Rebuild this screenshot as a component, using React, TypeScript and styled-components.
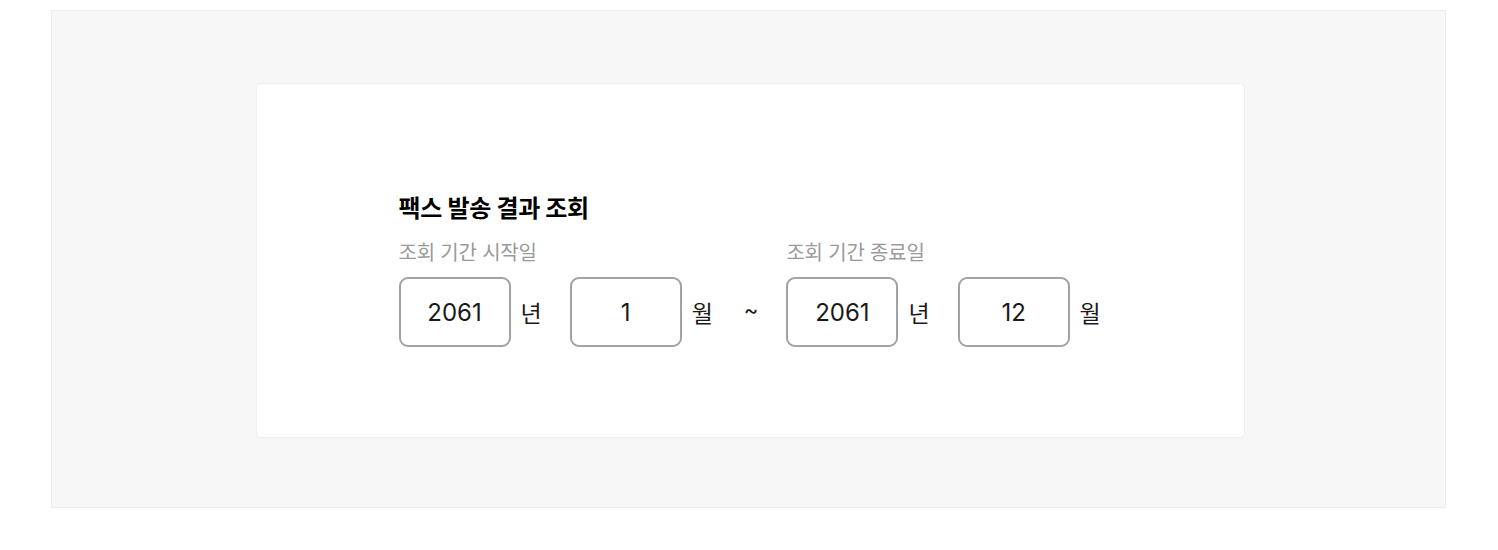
import * as React from 'react';
import styled, { createGlobalStyle } from 'styled-components';

const GlobalStyle = createGlobalStyle`
  body {
    margin: 0;
    background: #ffffff;
    font-family: Inter, "Noto Sans CJK KR", sans-serif;
    color: #111;
  }
`;

const Page = styled.div`
  padding: 10px 52px 0 51px;
`;

const Panel = styled.div`
  background: #f7f7f7;
  border: 1px solid #ececec;
  height: 498px;
  box-sizing: border-box;
  display: flex;
  justify-content: center;
  padding-top: 73px;
`;

const Card = styled.div`
  width: 987px;
  height: 353px;
  box-sizing: border-box;
  background: #fff;
  border-radius: 4px;
  box-shadow: 0 0 2px rgba(0, 0, 0, 0.12);
  padding: 112px 0 0 142px;
  margin-left: 3px;
`;

const Title = styled.h2`
  margin: 0;
  font-size: 24px;
  font-weight: 700;
  line-height: 26px;
  color: #000;
  letter-spacing: -0.3px;
`;

const Row = styled.div`
  display: flex;
  align-items: flex-end;
  margin-top: 19px;
`;

const Group = styled.div`
  display: flex;
  flex-direction: column;
`;

const Label = styled.div`
  font-size: 20px;
  line-height: 24px;
  color: #9a9a9a;
  margin-bottom: 12px;
  letter-spacing: -0.2px;
`;

const Fields = styled.div`
  display: flex;
  align-items: center;
`;

const NumBox = styled.div`
  width: 112px;
  height: 70px;
  box-sizing: border-box;
  border: 2px solid #a2a2a2;
  border-radius: 9px;
  display: flex;
  align-items: center;
  justify-content: center;
  font-size: 24px;
  color: #1a1a1a;
`;

const Unit = styled.span<{ $after?: number }>`
  font-size: 23px;
  color: #1a1a1a;
  margin: 0 ${p => p.$after ?? 0}px 0 10px;
`;

const Tilde = styled.span`
  font-size: 22px;
  height: 70px;
  line-height: 66px;
  margin: 0 28px 0 31px;
  color: #1a1a1a;
`;

const DateField = ({ label, year, month }: { label: string; year: string; month: string }) => (
  <Group>
    <Label>{label}</Label>
    <Fields>
      <NumBox>{year}</NumBox>
      <Unit $after={28}>년</Unit>
      <NumBox>{month}</NumBox>
      <Unit>월</Unit>
    </Fields>
  </Group>
);

export default function App() {
  return (
    <>
      <GlobalStyle />
      <Page>
        <Panel>
          <Card>
            <Title>팩스 발송 결과 조회</Title>
            <Row>
              <DateField label="조회 기간 시작일" year="2061" month="1" />
              <Tilde>~</Tilde>
              <DateField label="조회 기간 종료일" year="2061" month="12" />
            </Row>
          </Card>
        </Panel>
      </Page>
    </>
  );
}
